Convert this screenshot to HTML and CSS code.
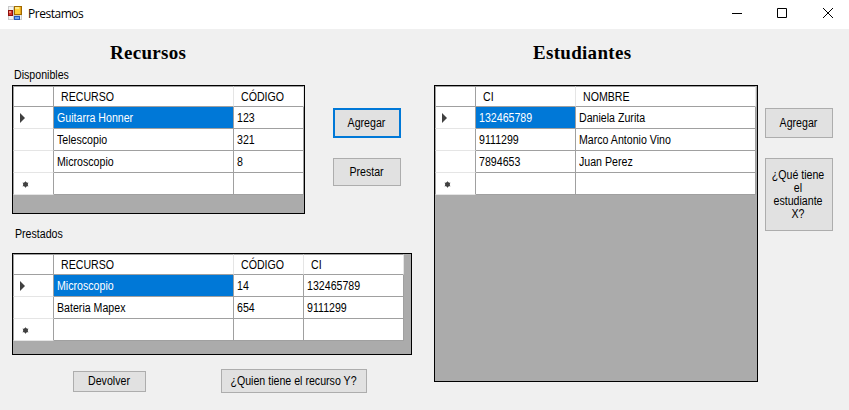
FILE: index.html
```html
<!DOCTYPE html>
<html lang="es">
<head>
<meta charset="utf-8">
<title>Prestamos</title>
<link rel="stylesheet" href="styles.css">
</head>
<body>
<header class="titlebar">
  <svg class="app-icon" width="14" height="14" viewBox="0 0 14 14" shape-rendering="crispEdges">
    <path fill="#c9c9c9" d="M0 0H14V14H0z"/><path fill="#f2f2f2" d="M1 1H5V4H1zM1 10H5V13H1zM12 9H13V13H12z"/>
    <path fill="#a06a00" d="M6 0H14V9H6z"/><path fill="#ffd23b" d="M7 1H12V8H7z"/><path fill="#ffe98a" d="M7 1H11V3H7z"/><path fill="#e9a51c" d="M12 1H13V8H12z"/>
    <path fill="#8c1010" d="M0 4H5V10H0z"/><path fill="#d63528" d="M1 5H4V9H1z"/><path fill="#f18b77" d="M1 5H3V7H1z"/>
    <path fill="#2458b8" d="M6 10H12V14H6z"/><path fill="#6da6f4" d="M7 11H11V13H7z"/>
  </svg>
  <span class="caption">Prestamos</span>
  <svg class="controls" width="102" height="11" viewBox="0 0 102 11" fill="none" stroke="#000">
    <path d="M0 5.500H10M45.500 .5H54.500V9.500H45.500zM91 0L101 10M101 0L91 10"/>
  </svg>
</header>
<main class="window">
  <section class="resources">
    <h2 class="heading">Recursos</h2>
    <p class="label"><span class="t">Disponibles</span></p>
    <div class="row">
      <div class="grid available">
        <i class="rh top"></i><b class="th"><span class="t">RECURSO</span></b><b class="th"><span class="t">CÓDIGO</span></b>
        <i class="rh current"></i><div class="td selected"><span class="t">Guitarra Honner</span></div><div class="td"><span class="t">123</span></div>
        <i class="rh"></i><div class="td"><span class="t">Telescopio</span></div><div class="td"><span class="t">321</span></div>
        <i class="rh"></i><div class="td"><span class="t">Microscopio</span></div><div class="td"><span class="t">8</span></div>
        <i class="rh"><svg class="new" width="7" height="7" viewBox="0 0 7 7"><path d="M3.500 .5V6.500M.8 2L6.200 5M.8 5L6.200 2"/><circle cx="3.500" cy="3.500" r="2.400"/></svg></i><div class="td"></div><div class="td"></div>
      </div>
      <div class="actions">
        <button class="btn focused"><span>Agregar</span></button>
        <button class="btn short"><span>Prestar</span></button>
      </div>
    </div>
    <p class="label loaned-label"><span class="t">Prestados</span></p>
    <div class="grid loaned">
      <i class="rh top"></i><b class="th"><span class="t">RECURSO</span></b><b class="th"><span class="t">CÓDIGO</span></b><b class="th"><span class="t">CI</span></b>
      <i class="rh current"></i><div class="td selected"><span class="t">Microscopio</span></div><div class="td"><span class="t">14</span></div><div class="td"><span class="t">132465789</span></div>
      <i class="rh"></i><div class="td"><span class="t">Bateria Mapex</span></div><div class="td"><span class="t">654</span></div><div class="td"><span class="t">9111299</span></div>
      <i class="rh"><svg class="new" width="7" height="7" viewBox="0 0 7 7"><path d="M3.500 .5V6.500M.8 2L6.200 5M.8 5L6.200 2"/><circle cx="3.500" cy="3.500" r="2.400"/></svg></i><div class="td"></div><div class="td"></div><div class="td"></div>
    </div>
    <div class="bottom">
      <button class="btn return"><span>Devolver</span></button>
      <button class="btn who"><span>¿Quien tiene el recurso Y?</span></button>
    </div>
  </section>
  <section class="students">
    <h2 class="heading">Estudiantes</h2>
    <div class="row">
      <div class="grid people">
        <i class="rh top"></i><b class="th"><span class="t">CI</span></b><b class="th"><span class="t">NOMBRE</span></b>
        <i class="rh current"></i><div class="td selected"><span class="t">132465789</span></div><div class="td"><span class="t">Daniela Zurita</span></div>
        <i class="rh"></i><div class="td"><span class="t">9111299</span></div><div class="td"><span class="t">Marco Antonio Vino</span></div>
        <i class="rh"></i><div class="td"><span class="t">7894653</span></div><div class="td"><span class="t">Juan Perez</span></div>
        <i class="rh"><svg class="new" width="7" height="7" viewBox="0 0 7 7"><path d="M3.500 .5V6.500M.8 2L6.200 5M.8 5L6.200 2"/><circle cx="3.500" cy="3.500" r="2.400"/></svg></i><div class="td"></div><div class="td"></div>
      </div>
      <div class="actions">
        <button class="btn"><span>Agregar</span></button>
        <button class="btn what"><span>¿Qué tiene<br>el<br>estudiante<br>X?</span></button>
      </div>
    </div>
  </section>
</main>
</body>
</html>
```

FILE: styles.css
```css
* { box-sizing: border-box; }
body { margin: 0; width: 849px; height: 410px; overflow: hidden; background: #f0f0f0; color: #000; font: 12px/14px "Liberation Sans", Arial, sans-serif; }
.titlebar { display: flex; height: 29px; padding: 0 15px 0 8px; background: #fff; }
.app-icon { margin-top: 6px; }
.caption { margin: 6px auto 0 6px; font: 12px/16px "Open Sans", sans-serif; letter-spacing: -.48px; }
.controls { margin-top: 8px; width: 102px; flex: none; }
.window { display: flex; }
.resources { flex: none; width: 434px; padding-left: 12px; }
.heading { margin: 0; height: 56px; padding-top: 13px; font: bold 19px/22px "Liberation Serif", serif; letter-spacing: .3px; }
.resources .heading { height: 39px; padding-left: 98px; }
.students .heading { padding-left: 99px; }
.label { margin: 0; height: 17px; padding: 0 2px; line-height: 15px; }
.loaned-label { height: 26px; margin-top: 13px; padding-left: 3px; }
.t { display: inline-block; white-space: nowrap; transform: scaleX(.885); transform-origin: 0 50%; }
.row { display: flex; }
.grid { display: grid; grid-auto-rows: 22px; align-content: start; justify-content: start; border: 1px solid #000; background: #ababab; }
.available { width: 293px; height: 129px; grid-template: 21px / 41px 180px 70px; }
.loaned { width: 400px; height: 102px; grid-template: 21px / 41px 180px 70px 100px; }
.people { width: 324px; height: 297px; grid-template: 21px / 41px 100px 180px; }
.th, .td { border: solid #a0a0a0; border-width: 0 1px 1px 0; background: #fff; }
.th { border-top-width: 1px; border-right-color: #e5e5e5; padding: 3px 0 0 6.500px; font-weight: normal; }
.td { padding: 4px 0 0 3px; }
.selected { background: #0078d7; color: #fff; }
.rh { display: flex; align-items: center; border: solid #a0a0a0; border-width: 0 1px 1px; border-bottom-color: #e5e5e5; background: #fff; font-style: normal; }
.top { border-top-width: 1px; border-bottom-color: #a0a0a0; }
.current::before { content: ""; margin: 1px 0 0 6px; border: solid transparent; border-width: 5px 0 5px 5px; border-left-color: #404040; }
.new { margin: 2px 0 0 8px; fill: #404040; stroke: #404040; }
.new circle { stroke: none; }
.actions { display: flex; flex-direction: column; gap: 20px; padding-top: 23px; margin-left: 28px; }
.students .actions { margin-left: 7px; }
.btn { width: 68px; height: 30px; padding: 0; border: 1px solid #adadad; background: #e1e1e1; color: #000; font: 12px/13px "Liberation Sans", Arial, sans-serif; white-space: nowrap; }
.btn span { display: block; margin-left: -1px; transform: scaleX(.885); }
.focused { border: 2px solid #0078d7; }
.short { height: 28px; }
.what { height: 73px; }
.what span { margin: 0 -5px 0 -7px; }
.bottom { display: flex; gap: 75px; padding: 14px 0 0 61px; }
.return { width: 73px; height: 21px; margin-top: 2px; }
.who { width: 146px; height: 24px; }
```
